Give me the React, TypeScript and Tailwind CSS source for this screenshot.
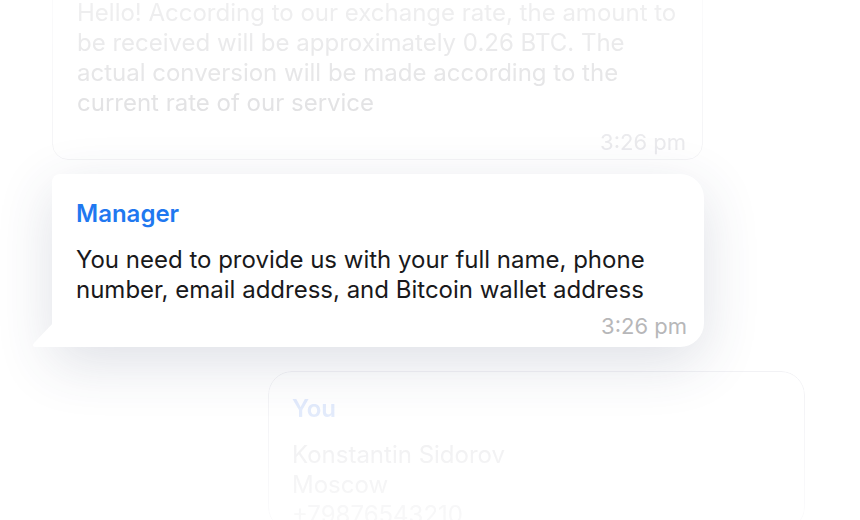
const font = { fontFamily: "Inter, 'Noto Sans', sans-serif" };

function Stamp({ faded }: { faded?: boolean }) {
  return (
    <div
      className={`text-right text-[22px] leading-6 ${
        faded ? "mt-3 text-[#e9e9ec]" : "mt-[9px] text-[#b7b7b9]"
      }`}
    >
      3:26 pm
    </div>
  );
}

export default function App() {
  return (
    <div
      className="h-[520px] w-[860px] overflow-hidden bg-white text-[24px] leading-[30px]"
      style={font}
    >
      <div className="-mt-[25px] flex flex-col">
        {/* previous message, faded out */}
        <div className="ml-[52px] w-[651px] rounded-2xl border border-[#f4f4f6] bg-white/40 pb-[5px] pl-6 pr-4 pt-[22px] [mask-image:linear-gradient(to_bottom,rgba(0,0,0,0.35),#000)]">
          <p className="w-[620px] text-[#dcdcde]">
            Hello! According to our exchange rate, the amount to be received
            will be approximately 0.26 BTC. The actual conversion will be made
            according to the current rate of our service
          </p>
          <Stamp faded />
        </div>

        {/* current message */}
        <div className="relative z-10 ml-[52px] mt-[14px] w-[652px] rounded-tl-lg rounded-r-3xl bg-white pb-[9px] pl-6 pr-[17px] pt-[25px] shadow-[0_16px_56px_rgba(50,60,100,0.16)]">
          <div className="font-semibold text-[#1f78f0]">Manager</div>
          <p className="mt-4 text-[#19191b]">
            You need to provide us with your full name, phone number, email
            address, and Bitcoin wallet address
          </p>
          <Stamp />
          <svg
            className="absolute -left-[21px] bottom-0"
            width="24"
            height="26"
            viewBox="0 0 24 26"
          >
            <path d="M24 0 L24 26 L5 26 Q0 26 3 22 Z" fill="#ffffff" />
          </svg>
        </div>

        {/* reply, faded out */}
        <div className="ml-[268px] mt-6 w-[537px] rounded-3xl border border-[#f2f2f5] bg-white/40 pl-[23px] pt-[22px] [mask-image:linear-gradient(to_bottom,#000,rgba(0,0,0,0.3))]">
          <div className="font-semibold text-[#dde7fb]">You</div>
          <div className="mt-4 text-[#ebebed]">
            <div>Konstantin Sidorov</div>
            <div>Moscow</div>
            <div>+79876543210</div>
          </div>
        </div>
      </div>
    </div>
  );
}
